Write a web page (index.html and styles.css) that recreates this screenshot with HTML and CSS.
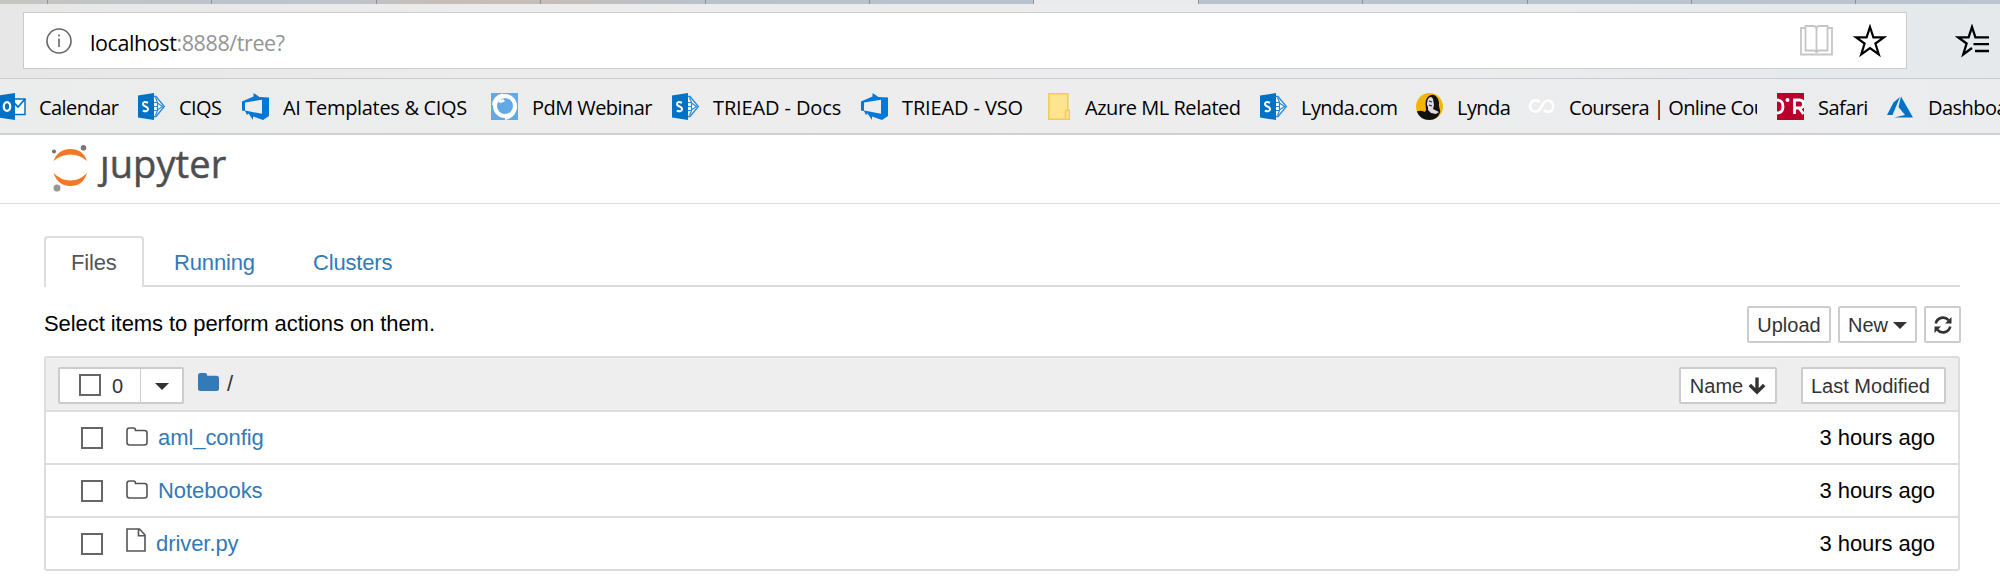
FILE: index.html
```
<!DOCTYPE html>
<html lang="en">
<head>
<meta charset="utf-8">
<title>Home</title>
<link rel="stylesheet" href="styles.css">
</head>
<body>
<svg class="defs" width="0" height="0" aria-hidden="true">
  <symbol id="sharepoint" viewBox="0 0 27 27">
    <path d="M15 3.500 L18 3.500 26.300 13.500 18 23.500 15 23.500" fill="#fff" stroke="#2a88d8" stroke-width="1.300"/>
    <path d="M15 9.500h4.500v8H15M19.500 9.500l-2-5M19.500 17.500l-2 5M19.500 10l5 3.500-5 3.500M15 13.500h4.500" fill="none" stroke="#2a88d8" stroke-width="1.200"/>
    <path d="M0 2.500 16 0v27L0 24.500z" fill="#0072c6"/>
    <path d="M10 9.800Q5 7.800 5 11 5 12.600 7.500 13.500 10 14.400 10 16.200 9.800 19.300 4.800 17.800" fill="none" stroke="#fff" stroke-width="2"/>
  </symbol>
  <symbol id="devops" viewBox="0 0 27 27">
    <path d="M0 8.500 11.500 3.500V0l6 4L27 4.500v18.500l-6 4-10-3.500V27L6.500 20.500 5 22 3 18 0 17.500z" fill="#0078d7"/>
    <path d="M3 9.500 20 6.800v14L3 17.500z" fill="#ededed"/>
  </symbol>
  <symbol id="folder-o" viewBox="0 0 22 19">
    <path d="M1 3.500Q1 1 3.500 1H7.500Q9.500 1 9.500 3.500H18.500Q21 3.500 21 6V15.500Q21 18 18.500 18H3.500Q1 18 1 15.500Z" fill="none" stroke="#555" stroke-width="1.600"/>
  </symbol>
</svg>

<div class="tabstrip"><i class="t1"></i><i></i><i></i><i></i><i></i><i></i><i></i><i class="active"></i><i></i><i></i><i></i><i></i><i></i></div>

<div class="addressrow">
  <div class="address">
    <svg class="info" width="26" height="26" viewBox="0 0 26 26"><circle cx="13" cy="13" r="12" fill="none" stroke="#666" stroke-width="1.600"/><path d="M13 10.500v8.500M13 6.500v2" stroke="#666" stroke-width="1.600"/></svg>
    <span class="url">localhost<span class="path">:8888/tree?</span></span>
    <svg class="book" width="33" height="31" viewBox="0 0 33 31" fill="none" stroke="#c6c6c6" stroke-width="1.800"><path d="M5.500 3H1v26.500h31V3h-4.500M5.500 1v24.500h8q3 0 3 2.500 0-2.500 3-2.500h8V1h-8q-3 0-3 3 0-3-3-3zM16.500 4v24"/></svg>
    <svg class="star" width="34" height="34" viewBox="0 0 34 34"><path d="M17 3l3.400 10.300H31L22.400 19.500 25.800 30.500 17 24 8.200 30.500 11.600 19.500 3 13.300H13.600z" fill="none" stroke="#000" stroke-width="2.200"/></svg>
  </div>
  <svg class="hub" width="36" height="34" viewBox="0 0 36 34"><path d="M34 13.300H20.400L17 3 13.600 13.300H3l8.600 6.200L8.200 30.500l8.800-6.500M18.500 20.200H34M20 27H34" fill="none" stroke="#000" stroke-width="2.300"/></svg>
</div>

<div class="bookmarks">
  <div class="bm"><svg width="27" height="27" viewBox="0 0 27 27"><path d="M12 6h14v15.500H12z" fill="#fff" stroke="#0072c6" stroke-width="1.500"/><path d="M14 9l5 5 7-8" fill="none" stroke="#0072c6" stroke-width="1.800"/><path d="M0 2.500 16 0v27L0 24.500z" fill="#0072c6"/><ellipse cx="8" cy="13.500" rx="3.200" ry="4.400" fill="none" stroke="#fff" stroke-width="2.300"/></svg><span>Calendar</span></div>
  <div class="bm"><svg width="27" height="27"><use href="#sharepoint"/></svg><span>CIQS</span></div>
  <div class="bm looser"><svg width="27" height="27"><use href="#devops"/></svg><span>AI Templates &amp; CIQS</span></div>
  <div class="bm"><svg width="27" height="27" viewBox="0 0 27 27"><path d="M0 0h27v27H0z" fill="#63a9e6"/><circle cx="14" cy="13" r="10" fill="none" stroke="#fff" stroke-width="4"/><path d="M2 12Q3 3 12 1.500M25 14Q24 24 14 26M6 8Q12 2 20 5" fill="none" stroke="#fff" stroke-width="2"/><path d="M8 8q3 1 5-1" fill="none" stroke="#fff" stroke-width="3"/></svg><span>PdM Webinar</span></div>
  <div class="bm loosest"><svg width="27" height="27"><use href="#sharepoint"/></svg><span>TRIEAD - Docs</span></div>
  <div class="bm loosest"><svg width="27" height="27"><use href="#devops"/></svg><span>TRIEAD - VSO</span></div>
  <div class="bm wide"><svg width="22" height="27" viewBox="0 0 22 27"><path d="M.8.8h19V17.500q2-1 1.700 2V26.200H.8z" fill="#ffe48f" stroke="#efcc55" stroke-width="1.500"/><path d="M17.500 26v-7q.5-2.500 2.300-2" fill="none" stroke="#efcc55" stroke-width="1.500"/></svg><span>Azure ML Related</span></div>
  <div class="bm"><svg width="27" height="27"><use href="#sharepoint"/></svg><span>Lynda.com</span></div>
  <div class="bm"><svg width="27" height="27" viewBox="0 0 27 27"><circle cx="13.500" cy="13.500" r="13.500" fill="#f3b600"/><path d="M.8 18.500q4-1.500 8 .5 2-2 1-5-1-7 2-10 4-4 8-1 4 4 3 9l1.500 7q-3 8-10.800 8Q4 27 .8 18.500z" fill="#111"/><path d="M12 6q3-4 5 0l1 6-1 4 6 3-3 2-5-1-3-3 0-3q-2-3 0-8z" fill="#ddd"/><path d="M13 8l3 1M13 12l3 1" stroke="#222" stroke-width="1.200"/></svg><span>Lynda</span></div>
  <div class="bm tight"><svg width="27" height="27" viewBox="0 0 27 27"><path d="M12 9Q8 6 4 8.500 0 13 4 17.500q5 3 8.500-2L15 11q4-6 9-1.500 3 5-1 8.500-4 2-7-1" fill="none" stroke="#fff" stroke-width="2.500"/></svg><span class="clip">Coursera | Online Cou</span></div>
  <div class="bm"><svg width="27" height="27" viewBox="0 0 27 27"><path d="M0 0h27v27H0z" fill="#b9002d"/><path d="M0 7q6 0 6 6.500T0 20" fill="none" stroke="#fff" stroke-width="2.800"/><circle cx="10.500" cy="7" r="2" fill="#fff"/><path d="M17.500 21V7h5q4 0 4 4t-4 4h-5M22 15l4.500 6" fill="none" stroke="#fff" stroke-width="2.800"/></svg><span>Safari</span></div>
  <div class="bm"><svg width="27" height="27" viewBox="0 0 27 27"><path d="M13 4 6.500 9.500 0 22h5.500z" fill="#0072c6"/><path d="M14 3.500 26 24.500H7L18 22 11.500 14z" fill="#0072c6"/></svg><span>Dashboard</span></div>
</div>

<header class="jheader">
  <svg width="36" height="48" viewBox="0 0 36 48"><path d="M1.500 17Q6 5 18.500 5T35 17Q28 10.500 18.500 10.500T1.500 17zM1.500 29Q6 42 18.500 42T35 29Q28 36.500 18.500 36.500T1.500 29z" fill="#f37726"/><circle cx="2" cy="7.500" r="2" fill="#6e6e6e"/><circle cx="31.500" cy="3.800" r="2.800" fill="#767677"/><circle cx="5" cy="44" r="3.500" fill="#989798"/></svg>
  <span class="word">ȷupyter</span>
</header>

<main>
  <nav class="tabs"><a class="on">Files</a><a>Running</a><a>Clusters</a></nav>
  <div class="toolbar">
    <span class="hint">Select items to perform actions on them.</span>
    <button class="btn">Upload</button>
    <button class="btn new">New <i class="caret"></i></button>
    <button class="btn refresh"><svg width="18" height="18" viewBox="0 0 18 18"><path d="M1.800 7.500A7.300 7.300 0 0 1 14.500 4.200M16.200 10.500A7.300 7.300 0 0 1 3.500 13.800" fill="none" stroke="#333" stroke-width="2.600"/><path d="M17.500 1v6.500H11zM.5 17v-6.500H7z" fill="#333"/></svg></button>
  </div>
  <div class="list">
    <div class="head">
      <div class="select"><span class="all"><i class="cb"></i><span class="count">0</span></span><span class="drop"><i class="caret"></i></span></div>
      <svg class="home" width="21" height="18" viewBox="0 0 21 18"><path d="M0 2.500Q0 0 2.500 0H7q2.200 0 2.200 2.800H18.500Q21 2.800 21 5.300V15.500Q21 18 18.500 18H2.500Q0 18 0 15.500z" fill="#337ab7"/></svg>
      <span class="slash">/</span>
      <button class="btn name">Name <svg width="18" height="18" viewBox="0 0 18 18"><path d="M9 .5V15M1.800 8 9 15.200 16.200 8" fill="none" stroke="#333" stroke-width="3.400"/></svg></button>
      <button class="btn modified">Last Modified</button>
    </div>
    <div class="row"><i class="cb"></i><svg width="22" height="19"><use href="#folder-o"/></svg><a>aml_config</a><time>3 hours ago</time></div>
    <div class="row"><i class="cb"></i><svg width="22" height="19"><use href="#folder-o"/></svg><a>Notebooks</a><time>3 hours ago</time></div>
    <div class="row file"><i class="cb"></i><svg width="20" height="24" viewBox="0 0 20 24"><path d="M1 1H13.500L19 7V23H1zM12.500 1V7.800H19" fill="none" stroke="#555" stroke-width="1.600"/></svg><a>driver.py</a><time>3 hours ago</time></div>
  </div>
</main>
</body>
</html>
```
FILE: styles.css
```
* { box-sizing: border-box; }
body { margin: 0; width: 2000px; height: 581px; overflow: hidden; background: #fff; color: #000; font: 22px "Liberation Sans", Arial, sans-serif; letter-spacing: -.07px; }
.defs { position: absolute; }
svg { display: block; flex: none; }
button { font-family: inherit; }

.tabstrip { display: flex; height: 4px; background: linear-gradient(90deg, #c6c6c0, #bcc3cb 12%, #bfc4cb 17%, #c5bdb8 22%, #c5bdb8 27%, #b9c2cc 36%, #bcc4cd); }
.tabstrip i { width: 164.400px; flex: none; border-right: 1px solid #8c9298; }
.tabstrip .t1 { width: 48px; }
.tabstrip .active { background: #e9ebed; }

.addressrow { height: 75px; display: flex; align-items: center; padding: 0 9px 0 23px; background: linear-gradient(90deg, #e6e7e6, #ececec 25%, #ebecee 70%, #e5e9ec); border-bottom: 1px solid #ccc; }
.address { width: 1884px; height: 57px; margin-top: -1px; display: flex; align-items: center; background: #fff; border: 1px solid #ccc; padding: 0 19px 0 22px; }
.info { margin-top: 1px; }
.url { margin: 3px 0 0 18px; flex: 1; font: 21.500px "Open Sans", "Noto Sans", sans-serif; letter-spacing: -.4px; }
.path { color: #949494; }
.book { margin-right: 20px; }
.hub { margin-left: auto; }

.bookmarks { height: 56px; display: grid; grid-template-columns: 139px 104px 249px 181px 189px 186px 213px 156px 112px 249px 110px 150px; align-items: center; background: linear-gradient(90deg, #ebecec, #ededed 50%, #ebecee); border-bottom: 2px solid #d0d0d0; }
.bookmarks .bm { margin-left: -1px; }
.bm { display: flex; align-items: center; gap: 14px; white-space: nowrap; font: 20px "Open Sans", "Noto Sans", sans-serif; letter-spacing: -.55px; }
.bookmarks .bm:first-child { gap: 13px; }
.bm span { margin-top: 3px; }
.looser { letter-spacing: -.33px; }
.loosest { letter-spacing: -.12px; }
.bookmarks .wide { gap: 15px; margin-left: 0; letter-spacing: -.45px; }
.tight { letter-spacing: -.65px; }
.clip { width: 188px; overflow: hidden; }

.jheader { height: 69px; display: flex; padding: 9px 0 0 52px; border-bottom: 1px solid #ddd; }
.word { margin: -8px 0 0 12px; font: 38px/54px "Open Sans", sans-serif; color: #4e4e4e; letter-spacing: .1px; -webkit-text-stroke: .5px #4e4e4e; }

main { padding: 32px 40px 0 44px; }
.tabs { display: flex; width: 1916px; height: 51px; border-bottom: 2px solid #ddd; color: #337ab7; letter-spacing: -.15px; }
.tabs a { height: 51px; line-height: 51px; padding: 1px 28px 0 30px; }
.tabs .on { width: 100px; height: 51px; padding: 0 0 0 25px; line-height: 49px; border: 2px solid #ddd; border-bottom: 0; border-radius: 4px 4px 0 0; background: #fff; color: #555; }
.toolbar { display: flex; height: 69px; width: 1917px; align-items: flex-start; padding-top: 19px; gap: 7px; }
.hint { margin-right: auto; line-height: 36px; }
.btn { height: 37px; border: 2px solid #ccc; border-radius: 2px; background: #fff; color: #333; font-size: 20px; display: flex; align-items: center; justify-content: center; padding: 2px 0 0; width: 84px; gap: 5px; white-space: nowrap; }
.new { width: 79px; }
.refresh { width: 37px; padding: 0; }
.caret { border: 7px solid transparent; border-top-color: #333; border-bottom: 0; }
.list { width: 1916px; border: 2px solid #ddd; border-radius: 3px; }
.head { height: 54px; background: #eee; display: flex; align-items: center; padding: 2px 12px 0; border-bottom: 2px solid #ddd; }
.select { width: 126px; height: 37px; display: flex; background: #fff; border: 2px solid #ccc; border-radius: 2px; font-size: 20px; color: #333; }
.all { width: 81px; display: flex; align-items: center; padding-left: 19px; gap: 11px; border-right: 1px solid #ccc; }
.count { margin-top: 2px; }
.drop { flex: 1; display: flex; align-items: center; justify-content: center; padding-top: 3px; }
.cb { width: 22px; height: 22px; border: 2px solid #666; background: #fff; flex: none; }
.home { margin: -6px 8px 0 14px; }
.slash { margin-top: -3px; color: #333; }
.name { width: 98px; margin-left: auto; margin-right: 24px; }
.modified { width: 145px; justify-content: flex-start; padding-left: 8px; }
.row { display: flex; align-items: center; height: 53px; padding: 0 23px 0 35px; border-bottom: 2px solid #ddd; color: #337ab7; }
.row a, .row time { margin-top: 1px; }
.row:last-child { border-bottom: 0; height: 51px; }
.row svg { margin: -3px 10px 0 23px; }
.file svg { margin: -8px 10px 0 23px; }
.row time { margin-left: auto; color: #000; }
```
